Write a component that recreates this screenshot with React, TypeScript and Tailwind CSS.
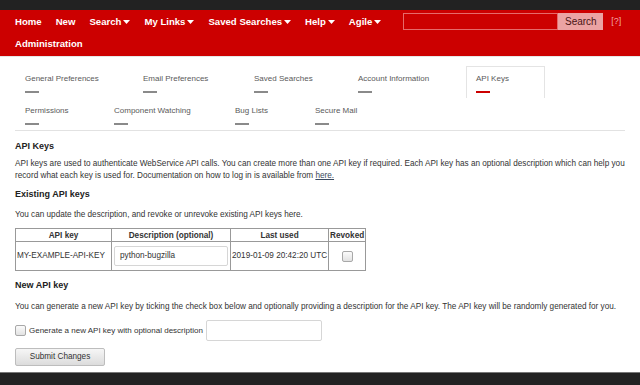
import React from "react";

const Caret = () => (
  <svg width="7" height="4" viewBox="0 0 7 4" className="ml-[2px] mt-[1px] flex-none">
    <path d="M0 0h7L3.5 4z" fill="#fff" />
  </svg>
);

const NavItem = ({ label, menu }: { label: string; menu?: boolean }) => (
  <span className="flex flex-none items-center whitespace-nowrap text-white font-bold text-[9.6px] leading-[11px]">
    {label}
    {menu && <Caret />}
  </span>
);

const tabsTop = [
  { label: "General Preferences", w: "w-[118px]" },
  { label: "Email Preferences", w: "w-[111px]" },
  { label: "Saved Searches", w: "w-[104px]" },
  { label: "Account Information", w: "w-[118px]" },
  { label: "API Keys", w: "w-[79px]", active: true },
];

const tabsBottom = [
  { label: "Permissions", w: "w-[89px]" },
  { label: "Component Watching", w: "w-[121px]" },
  { label: "Bug Lists", w: "w-[80px]" },
  { label: "Secure Mail", w: "w-[90px]" },
];

const Tab = ({ label, w, active }: { label: string; w: string; active?: boolean }) => (
  <div
    className={
      "flex flex-none flex-col pl-[9px] pt-[7px] pb-[5px] h-[32px] border border-b-0 " +
      w +
      " " +
      (active ? "border-[#e4e4e4] bg-white" : "border-transparent")
    }
  >
    <span className="text-[8px] leading-[9px] text-[#5a5a5a] whitespace-nowrap">{label}</span>
    <span
      className={"mt-[8px] w-[14px] h-[3px] " + (active ? "bg-[#cc0000]" : "bg-[#8a8a8a]")}
    />
  </div>
);

export default function App() {
  return (
    <div
      className="w-full h-[385px] overflow-hidden bg-white flex flex-col"
      style={{ fontFamily: '"Liberation Sans", Arial, sans-serif' }}
    >
      <div className="h-[10px] bg-[#222]" />

      <header className="bg-[#cc0000] h-[46px] px-[15px] pt-[3px] flex flex-col gap-[5px]">
        <div className="flex items-center h-[17px]">
          <div className="flex flex-none items-center gap-[14px]">
            <NavItem label="Home" />
            <NavItem label="New" />
            <NavItem label="Search" menu />
            <NavItem label="My Links" menu />
            <NavItem label="Saved Searches" menu />
            <NavItem label="Help" menu />
            <NavItem label="Agile" menu />
          </div>
          <div className="flex flex-none items-center ml-[22px]">
            <div className="w-[155px] h-[17px] border border-[#e66a6a] bg-[#cc0000]" />
            <button className="w-[45px] h-[17px] bg-[#eba3a3] text-[#4a1414] text-[10px] leading-[17px]">
              Search
            </button>
            <span className="ml-[8px] text-[9px] text-[#f2a8a8]">[?]</span>
          </div>
        </div>
        <div className="flex items-center h-[17px]">
          <NavItem label="Administration" />
        </div>
      </header>
      <div className="h-px bg-[#e6e6e6]" />

      <div className="px-[15px] pt-[9px]">
        <div className="flex">
          {tabsTop.map((t) => (
            <Tab key={t.label} label={t.label} w={t.w} active={t.active} />
          ))}
        </div>
        <div className="flex">
          {tabsBottom.map((t) => (
            <Tab key={t.label} label={t.label} w={t.w} />
          ))}
        </div>
        <div className="w-[610px] h-px bg-[#e2e2e2]" />
      </div>

      <main className="pl-[15px] pr-[12px] text-[8.2px] leading-[12px] text-[#333]">
        <h2 className="mt-[10px] text-[9px] leading-[11px] font-bold text-[#222]">API Keys</h2>
        <p className="mt-[6px]">
          API keys are used to authenticate WebService API calls. You can create more than one API key
          if required. Each API key has an optional description which can help you record what each
          key is used for. Documentation on how to log in is available from{" "}
          <a className="underline text-[#3a4a60]">here.</a>
        </p>

        <h2 className="mt-[7px] text-[9px] leading-[11px] font-bold text-[#222]">Existing API keys</h2>
        <p className="mt-[9px]">
          You can update the description, and revoke or unrevoke existing API keys here.
        </p>

        <table className="mt-[7px] border-collapse text-[8.2px] text-[#333]">
          <thead>
            <tr className="h-[13px]">
              <th className="w-[96px] border border-[#999] font-bold leading-[11px]">API key</th>
              <th className="w-[119px] border border-[#999] font-bold leading-[11px]">
                Description (optional)
              </th>
              <th className="w-[96px] border border-[#999] font-bold leading-[11px]">Last used</th>
              <th className="w-[37px] border border-[#999] font-bold leading-[11px]">Revoked</th>
            </tr>
          </thead>
          <tbody>
            <tr className="h-[29px]">
              <td className="border border-[#999] px-[1px] whitespace-nowrap">MY-EXAMPLE-API-KEY</td>
              <td className="border border-[#999] px-[2px]">
                <div className="h-[20px] border border-[#d6d6d6] rounded-[2px] px-[5px] flex items-center">
                  python-bugzilla
                </div>
              </td>
              <td className="border border-[#999] px-[1px] whitespace-nowrap">
                2019-01-09 20:42:20 UTC
              </td>
              <td className="border border-[#999]">
                <div className="mx-auto w-[11px] h-[11px] rounded-[2px] border border-[#a8a8a8] bg-gradient-to-b from-[#fbfbfb] to-[#e2e2e2]" />
              </td>
            </tr>
          </tbody>
        </table>

        <h2 className="mt-[9px] text-[9px] leading-[11px] font-bold text-[#222]">New API key</h2>
        <p className="mt-[10px] whitespace-nowrap">
          You can generate a new API key by ticking the check box below and optionally providing a
          description for the API key. The API key will be randomly generated for you.
        </p>

        <div className="mt-[7px] flex items-center h-[21px]">
          <div className="w-[11px] h-[11px] rounded-[2px] border border-[#a8a8a8] bg-gradient-to-b from-[#fbfbfb] to-[#e2e2e2]" />
          <span className="ml-[3px] text-[8px]">Generate a new API key with optional description</span>
          <div className="ml-[3px] w-[116px] h-[21px] border border-[#d6d6d6] rounded-[2px]" />
        </div>

        <button className="mt-[7px] w-[90px] h-[18px] border border-[#bdbdbd] rounded-[2px] bg-gradient-to-b from-[#f6f6f6] to-[#dcdcdc] text-[8.2px] text-[#333]">
          Submit Changes
        </button>
      </main>

      <div className="mt-auto h-[13px] bg-[#222] border-t border-[#777]" />
    </div>
  );
}
